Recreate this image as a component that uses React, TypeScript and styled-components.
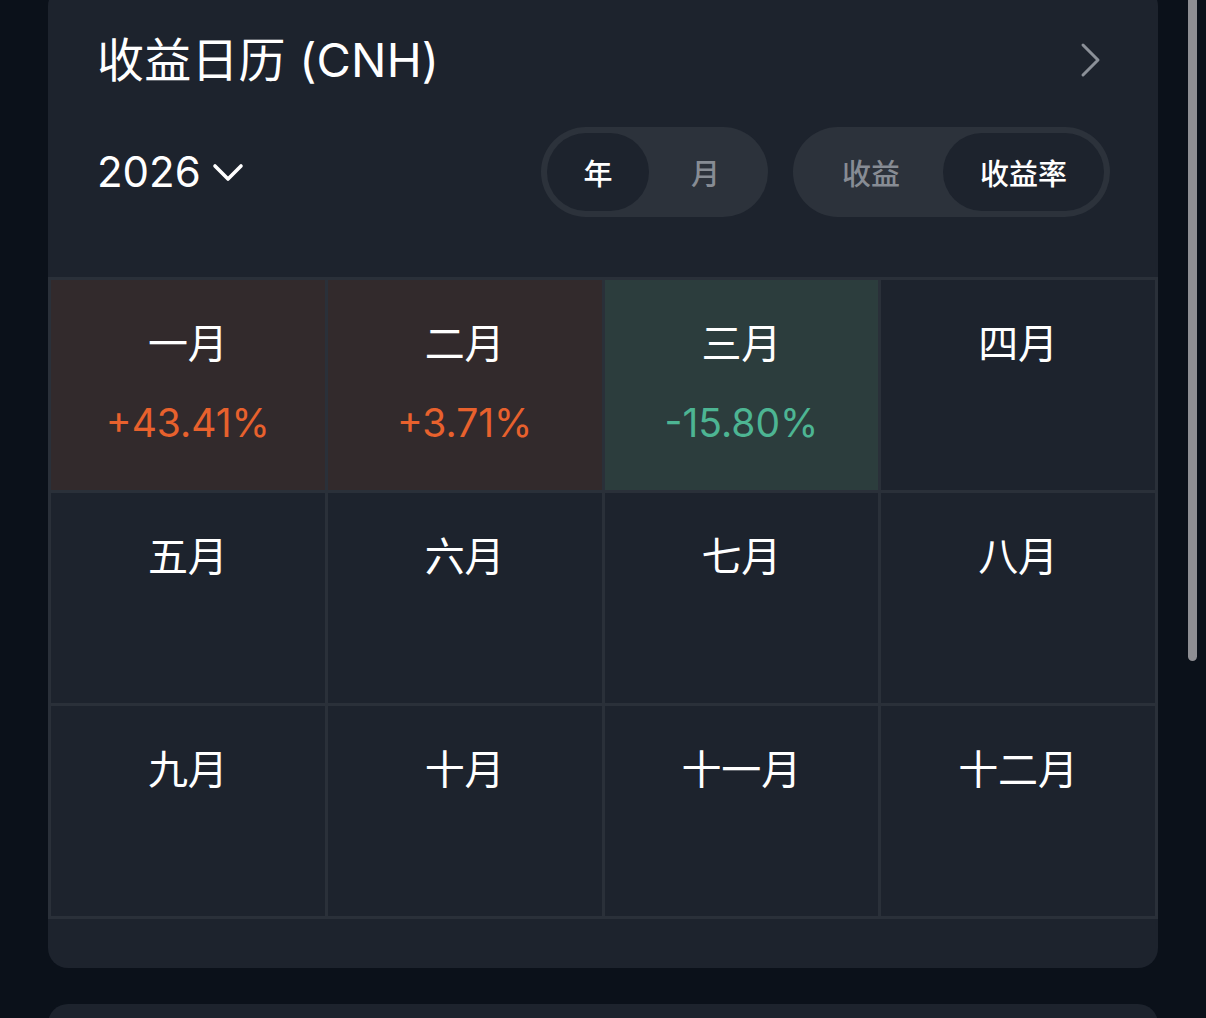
import React from 'react';
import styled, { createGlobalStyle } from 'styled-components';

const GlobalStyle = createGlobalStyle`
  html, body {
    margin: 0;
    padding: 0;
    background: #0b111a;
  }
  body {
    font-family: "Inter", "Noto Sans CJK SC", sans-serif;
    color: #ffffff;
    overflow: hidden;
  }
`;

type Trend = 'up' | 'down' | 'none';

type MonthData = {
  label: string;
  value?: string;
  trend: Trend;
};

const months: MonthData[] = [
  { label: '一月', value: '+43.41%', trend: 'up' },
  { label: '二月', value: '+3.71%', trend: 'up' },
  { label: '三月', value: '-15.80%', trend: 'down' },
  { label: '四月', trend: 'none' },
  { label: '五月', trend: 'none' },
  { label: '六月', trend: 'none' },
  { label: '七月', trend: 'none' },
  { label: '八月', trend: 'none' },
  { label: '九月', trend: 'none' },
  { label: '十月', trend: 'none' },
  { label: '十一月', trend: 'none' },
  { label: '十二月', trend: 'none' },
];

const cellBg = (trend: Trend) => {
  if (trend == 'up') {
    return '#322a2c';
  }
  if (trend == 'down') {
    return '#2c3d3d';
  }
  return '#1d232d';
};

const valueColor = (trend: Trend) => (trend == 'up' ? '#e8612d' : '#4db593');

type Segment = { label: string; width: number };

const SegmentedToggle = ({ items, active }: { items: Segment[]; active: number }) => {
  return (
    <Pill>
      {items.map((item, i) => (
        <PillSegment key={item.label} $width={item.width} $active={i == active}>
          {item.label}
        </PillSegment>
      ))}
    </Pill>
  );
};

const App = () => {
  return (
    <>
      <GlobalStyle />
      <Page>
        <Column>
          <Card>
            <Header>
              <TitleRow>
                <Title>收益日历 (CNH)</Title>
                <svg width="22" height="36" viewBox="0 0 22 36" fill="none">
                  <polyline
                    points="3,3 18,18 3,33"
                    stroke="#8b9098"
                    strokeWidth="3"
                    strokeLinecap="round"
                    strokeLinejoin="round"
                  />
                </svg>
              </TitleRow>
              <Controls>
                <YearPicker>
                  2026
                  <svg width="32" height="22" viewBox="0 0 32 22" fill="none">
                    <polyline
                      points="3,5 16,18 29,5"
                      stroke="#ffffff"
                      strokeWidth="3.6"
                      strokeLinecap="round"
                      strokeLinejoin="round"
                    />
                  </svg>
                </YearPicker>
                <Toggles>
                  <SegmentedToggle
                    items={[
                      { label: '年', width: 102 },
                      { label: '月', width: 113 },
                    ]}
                    active={0}
                  />
                  <SegmentedToggle
                    items={[
                      { label: '收益', width: 144 },
                      { label: '收益率', width: 161 },
                    ]}
                    active={1}
                  />
                </Toggles>
              </Controls>
            </Header>
            <MonthGrid>
              {months.map((m) => (
                <MonthCell key={m.label} $trend={m.trend}>
                  <MonthLabel>{m.label}</MonthLabel>
                  {m.value && <MonthValue $trend={m.trend}>{m.value}</MonthValue>}
                </MonthCell>
              ))}
            </MonthGrid>
          </Card>
          <NextCard />
        </Column>
        <Scrollbar />
      </Page>
    </>
  );
};

const Page = styled.div`
  position: relative;
  width: 1206px;
  height: 1018px;
  overflow: hidden;
  background: #0b111a;
`;

const Column = styled.div`
  display: flex;
  flex-direction: column;
  gap: 36px;
  width: 1110px;
  margin-left: 48px;
  // page is scrolled a little, card top sits above the viewport
  margin-top: -14px;
`;

const Card = styled.section`
  background: #1d232d;
  border-radius: 20px;
  overflow: hidden;
  padding-bottom: 49px;
`;

const NextCard = styled.section`
  background: #1d232d;
  border-radius: 20px;
  height: 200px;
`;

const Header = styled.div`
  display: flex;
  flex-direction: column;
  padding: 44px 56px 60px 49px;
`;

const TitleRow = styled.div`
  display: flex;
  align-items: center;
  justify-content: space-between;
  height: 60px;
`;

const Title = styled.h1`
  margin: 0;
  font-size: 47px;
  font-weight: 400;
  line-height: 60px;
  letter-spacing: 0.2px;
`;

const Controls = styled.div`
  display: flex;
  align-items: center;
  justify-content: space-between;
  margin-top: 37px;
  margin-right: -8px;
`;

const YearPicker = styled.div`
  display: flex;
  align-items: center;
  gap: 11px;
  font-size: 42px;
  font-weight: 400;
  line-height: 1;
`;

const Toggles = styled.div`
  display: flex;
  gap: 25px;
`;

const Pill = styled.div`
  display: flex;
  padding: 6px;
  border-radius: 45px;
  background: #2c323b;
`;

const PillSegment = styled.div<{ $width: number; $active: boolean }>`
  display: flex;
  align-items: center;
  justify-content: center;
  width: ${(p) => p.$width}px;
  height: 78px;
  border-radius: 39px;
  font-size: 29px;
  font-weight: 500;
  background: ${(p) => (p.$active ? '#1d232d' : 'transparent')};
  color: ${(p) => (p.$active ? '#ffffff' : '#878c94')};
`;

const MonthGrid = styled.div`
  display: grid;
  grid-template-columns: repeat(4, 1fr);
  grid-auto-rows: 210px;
  gap: 3px;
  padding: 3px;
  background: #2a3039;
`;

const MonthCell = styled.div<{ $trend: Trend }>`
  display: flex;
  flex-direction: column;
  align-items: center;
  padding-top: 40px;
  gap: 31px;
  background: ${(p) => cellBg(p.$trend)};
`;

const MonthLabel = styled.div`
  font-size: 40px;
  font-weight: 400;
  line-height: 48px;
  color: #ffffff;
`;

const MonthValue = styled.div<{ $trend: Trend }>`
  font-size: 39px;
  font-weight: 400;
  line-height: 48px;
  color: ${(p) => valueColor(p.$trend)};
`;

const Scrollbar = styled.div`
  position: absolute;
  top: -10px;
  left: 1188px;
  width: 9px;
  height: 671px;
  border-radius: 5px;
  background: #8e8e93;
`;

export default App;
